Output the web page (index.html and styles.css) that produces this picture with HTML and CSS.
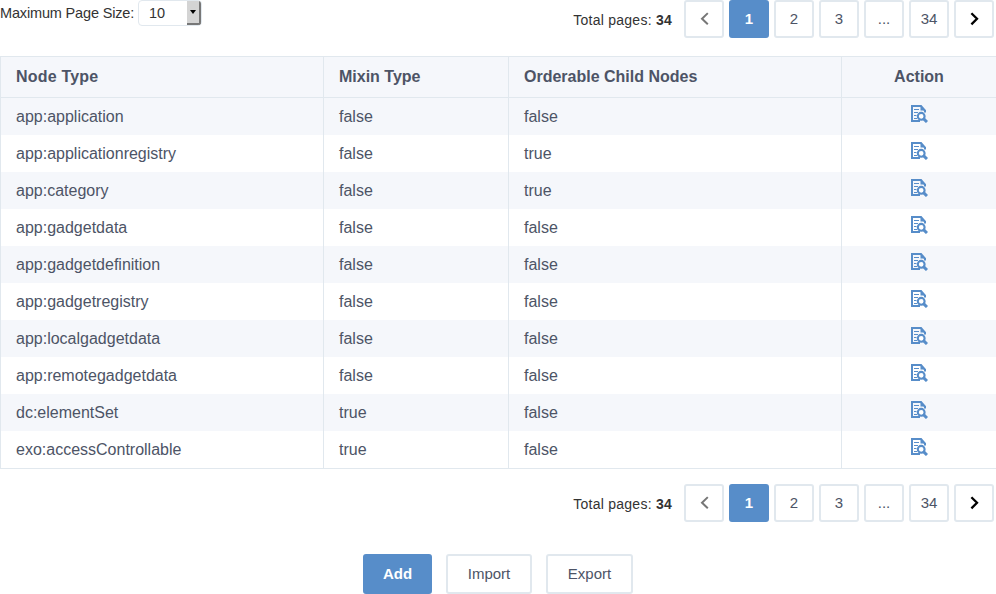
FILE: index.html
```html
<!DOCTYPE html>
<html lang="en">
<head>
<meta charset="utf-8">
<title>Node Types</title>
<link rel="stylesheet" href="styles.css">
</head>
<body>
<svg class="defs" aria-hidden="true">
  <symbol id="view" viewBox="0 0 17 18">
    <path d="M14 7.500V5.600L10 1H1v15h8" fill="none" stroke="currentColor" stroke-width="2"/>
    <path d="M9.500 1v4.500H15z" fill="currentColor"/>
    <path d="M3 4.500H8M3 7.500H7M3 10.500H5.500M3 13.500H6" fill="none" stroke="currentColor" stroke-width="1.200"/>
    <circle cx="10.200" cy="11.300" r="3.400" fill="#fff" stroke="currentColor" stroke-width="2.100"/>
    <path d="M12.500 13.600L16 17" stroke="currentColor" stroke-width="3"/>
  </symbol>
  <symbol id="prev" viewBox="0 0 9 14"><path d="M7.800 1.100L2 6.700L7.800 12.300" fill="none" stroke="currentColor" stroke-width="2"/></symbol>
  <symbol id="next" viewBox="0 0 9 14"><path d="M1.400 1.200L7 6.800L1.400 12.400" fill="none" stroke="currentColor" stroke-width="2.300"/></symbol>
</svg>
<header class="toolbar">
  <div class="size"><span class="size-label">Maximum Page Size:</span><div class="select"><span>10</span><i class="arrow"></i></div></div>
  <nav class="pager"><span class="total">Total pages: <b>34</b></span><a class="prev"><svg><use href="#prev"/></svg></a><a class="current">1</a><a>2</a><a>3</a><a>...</a><a>34</a><a class="next"><svg><use href="#next"/></svg></a></nav>
</header>
<table>
  <colgroup><col class="c1"><col class="c2"><col class="c3"><col class="c4"></colgroup>
  <thead><tr><th class="node">Node Type</th><th>Mixin Type</th><th>Orderable Child Nodes</th><th class="action">Action</th></tr></thead>
  <tbody>
    <tr><td>app:application</td><td>false</td><td>false</td><td class="action"><svg><use href="#view"/></svg></td></tr>
    <tr><td>app:applicationregistry</td><td>false</td><td>true</td><td class="action"><svg><use href="#view"/></svg></td></tr>
    <tr><td>app:category</td><td>false</td><td>true</td><td class="action"><svg><use href="#view"/></svg></td></tr>
    <tr><td>app:gadgetdata</td><td>false</td><td>false</td><td class="action"><svg><use href="#view"/></svg></td></tr>
    <tr><td>app:gadgetdefinition</td><td>false</td><td>false</td><td class="action"><svg><use href="#view"/></svg></td></tr>
    <tr><td>app:gadgetregistry</td><td>false</td><td>false</td><td class="action"><svg><use href="#view"/></svg></td></tr>
    <tr><td>app:localgadgetdata</td><td>false</td><td>false</td><td class="action"><svg><use href="#view"/></svg></td></tr>
    <tr><td>app:remotegadgetdata</td><td>false</td><td>false</td><td class="action"><svg><use href="#view"/></svg></td></tr>
    <tr><td>dc:elementSet</td><td>true</td><td>false</td><td class="action"><svg><use href="#view"/></svg></td></tr>
    <tr><td>exo:accessControllable</td><td>true</td><td>false</td><td class="action"><svg><use href="#view"/></svg></td></tr>
  </tbody>
</table>
<nav class="pager bottom"><span class="total">Total pages: <b>34</b></span><a class="prev"><svg><use href="#prev"/></svg></a><a class="current">1</a><a>2</a><a>3</a><a>...</a><a>34</a><a class="next"><svg><use href="#next"/></svg></a></nav>
<div class="buttons"><button class="primary">Add</button><button class="import">Import</button><button class="export">Export</button></div>
</body>
</html>
```
FILE: styles.css
```css
* { box-sizing: border-box; }
body { margin: 0; height: 594px; overflow: hidden; background: #fff; color: #333; font: 14px/20px "Liberation Sans", Arial, sans-serif; }
.defs { position: absolute; width: 0; height: 0; }
.toolbar { display: flex; justify-content: space-between; height: 56px; }
.size { display: flex; align-items: center; height: 26px; font-size: 14.5px; }
.size-label { width: 138px; white-space: nowrap; letter-spacing: -0.16px; }
.select { display: flex; align-items: center; justify-content: space-between; width: 64px; height: 26px; padding-left: 10px; border: 1px solid #e1e8ee; border-radius: 4px; overflow: hidden; }
.arrow { display: flex; align-items: center; justify-content: center; width: 14px; height: 24px; background: #d4d4d4; border: solid #777; border-width: 0 2px 2px 0; }
.arrow::after { content: ""; border: solid transparent; border-width: 4px 3.5px 0; border-top-color: #000; }
.pager { display: flex; gap: 5px; padding-right: 2px; height: 38px; }
.total { margin-right: 7px; line-height: 40px; white-space: nowrap; letter-spacing: 0.25px; }
.pager a { display: flex; align-items: center; justify-content: center; width: 40px; height: 38px; border: 2px solid #e1e8ee; border-radius: 3px; color: #4d5466; font-size: 15px; }
.pager .current { background: #578dc9; border-color: #578dc9; color: #fff; font-weight: bold; }
.pager svg { width: 9px; height: 14px; }
.pager .prev { color: #777; }
.pager .next { color: #000; }
table { width: 996px; table-layout: fixed; border-spacing: 0; border: solid #e1e8ee; border-width: 1px 0; color: #4d5466; font-size: 16px; }
.c1 { width: 323px; }
.c2 { width: 185px; }
.c3 { width: 333px; }
.c4 { width: 155px; }
th, td { padding: 0 15px; border-left: 1px solid #e1e8ee; text-align: left; }
th { height: 41px; padding-bottom: 1px; background: #f5f7fb; border-bottom: 1px solid #e1e8ee; }
.node { letter-spacing: 0.2px; }
td { height: 37px; }
tbody tr:nth-child(odd) { background: #f5f7fb; }
.action { text-align: center; color: #578dc9; }
th.action { color: #4d5466; }
td svg { display: block; width: 17px; height: 18px; margin: -6px auto 0; }
.bottom { justify-content: flex-end; margin-top: 15px; }
.buttons { display: flex; justify-content: center; gap: 14px; margin-top: 32px; }
button { width: 86px; height: 40px; padding: 0 0 2px; border: 2px solid #e1e8ee; border-radius: 3px; background: #fff; color: #4d5466; font: 15px "Liberation Sans", Arial, sans-serif; }
.primary { width: 69px; border-color: #578dc9; background: #578dc9; color: #fff; font-weight: bold; }
.export { width: 87px; }
```
